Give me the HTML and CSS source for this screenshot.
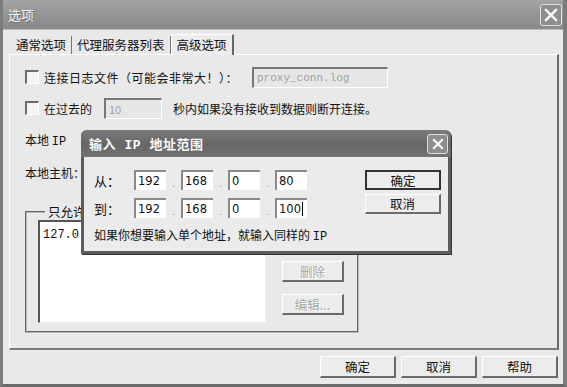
FILE: index.html
```html
<!DOCTYPE html>
<html lang="zh-CN">
<head>
    <meta charset="UTF-8">
    <title>选项</title>
    <link rel="stylesheet" href="styles.css">
</head>
<body>
    <div class="window">
        <div class="titlebar">
            <span class="title">选项</span>
            <span class="close">
                <svg width="14" height="14" viewBox="0 0 14 14"><path d="M2 2 L12 12 M12 2 L2 12" stroke="#fff" stroke-width="2.4" stroke-linecap="square"/></svg>
            </span>
        </div>

        <div class="client">
            <div class="tabs">
                <span class="tab">通常选项</span>
                <span class="tab">代理服务器列表</span>
                <span class="tab active">高级选项</span>
            </div>

            <div class="panel">
                <div class="row row-log">
                    <span class="check"></span>
                    <span class="label">连接日志文件（可能会非常大！）：</span>
                    <span class="field disabled log-field mono">proxy_conn.log</span>
                </div>
                <div class="row row-timeout">
                    <span class="check"></span>
                    <span class="label">在过去的</span>
                    <span class="field disabled sec-field">10</span>
                    <span class="label after">秒内如果没有接收到数据则断开连接。</span>
                </div>
                <div class="row row-ip">
                    <span class="label">本地 <span class="mono">IP</span></span>
                </div>
                <div class="row row-host">
                    <span class="label">本地主机：</span>
                </div>

                <fieldset class="group">
                    <legend>只允许</legend>
                    <div class="group-body">
                        <div class="listbox"><span class="mono">127.0</span></div>
                        <div class="side-buttons">
                            <span class="btn small disabled">删除</span>
                            <span class="btn small disabled">编辑...</span>
                        </div>
                    </div>
                </fieldset>
            </div>

            <div class="footer">
                <span class="btn">确定</span>
                <span class="btn">取消</span>
                <span class="btn">帮助</span>
            </div>
        </div>

        <!-- 弹出的对话框 -->
        <div class="dialog">
            <div class="dialog-title">
                <span class="title">输入 <span class="mono">IP</span> 地址范围</span>
                <span class="close small">
                    <svg width="12" height="12" viewBox="0 0 12 12"><path d="M2 2 L10 10 M10 2 L2 10" stroke="#fff" stroke-width="2.2" stroke-linecap="square"/></svg>
                </span>
            </div>
            <div class="dialog-body">
                <div class="ip-area">
                    <div class="ip-row">
                        <span class="ip-label">从：</span>
                        <span class="octet">192</span><span class="dot">.</span>
                        <span class="octet">168</span><span class="dot">.</span>
                        <span class="octet">0</span><span class="dot">.</span>
                        <span class="octet">80</span>
                    </div>
                    <div class="ip-row">
                        <span class="ip-label">到：</span>
                        <span class="octet">192</span><span class="dot">.</span>
                        <span class="octet">168</span><span class="dot">.</span>
                        <span class="octet">0</span><span class="dot">.</span>
                        <span class="octet">100<i class="caret"></i></span>
                    </div>
                    <p class="hint">如果你想要输入单个地址，就输入同样的 <span class="mono">IP</span></p>
                </div>
                <div class="dialog-buttons">
                    <span class="btn default">确定</span>
                    <span class="btn">取消</span>
                </div>
            </div>
        </div>
    </div>
</body>
</html>
```

FILE: styles.css
```css
/* общие */
body {
    margin: 0;
    font-family: "Noto Sans CJK SC", sans-serif;
    font-size: 12px;
    color: #111;
}

.mono {
    font-family: "Liberation Mono", "Noto Sans CJK SC", monospace;
}

.window {
    position: relative;
    width: 567px;
    height: 387px;
    box-sizing: border-box;
    background: #e9e9e9;
    border-left: 3px solid #7c7c7c;
    border-right: 4px solid #7c7c7c;
    border-bottom: 3px solid #6a6a6a;
    display: flex;
    flex-direction: column;
    overflow: hidden;
}

.titlebar {
    height: 29px;
    flex: none;
    display: flex;
    align-items: center;
    justify-content: space-between;
    padding: 0 1px 0 5px;
    background: linear-gradient(#a4a4a4, #929292 60%, #8a8a8a);
    border-bottom: 1px solid #bdbdbd;
}

.titlebar .title {
    color: #f4f4f4;
    font-size: 13px;
    text-shadow: 1px 1px 0 #707070;
}

.close {
    width: 20px;
    height: 20px;
    display: flex;
    align-items: center;
    justify-content: center;
    background: #8e8e8e;
    border: 1px solid #e0e0e0;
    border-radius: 3px;
}

.close.small {
    width: 19px;
    height: 18px;
}

.client {
    flex: 1;
    display: flex;
    flex-direction: column;
    padding: 4px 4px 0 6px;
}

.tabs {
    display: flex;
    height: 20px;
    padding-left: 2px;
    align-items: flex-end;
}

.tab {
    height: 18px;
    line-height: 18px;
    padding: 0 5px;
    border-right: 1px solid #777;
    font-size: 12.5px;
}

.tab.active {
    height: 20px;
    line-height: 20px;
    background: #ececec;
    border-top: 1px solid #fff;
    border-left: 1px solid #fff;
    border-right: 2px solid #666;
    margin-bottom: -1px;
    position: relative;
}

.panel {
    height: 296px;
    box-sizing: border-box;
    border-top: 1px solid #fff;
    border-left: 1px solid #fff;
    border-right: 2px solid #6a6a6a;
    border-bottom: 2px solid #7a7a7a;
    padding: 11px 0 0 15px;
    display: flex;
    flex-direction: column;
}

.row {
    display: flex;
    align-items: center;
    height: 22px;
}

.row-timeout { margin-top: 9px; }
.row-ip { margin-top: 10px; }
.row-host { margin-top: 10px; }

.check {
    width: 11px;
    height: 11px;
    background: #f4f4f4;
    border-top: 2px solid #6c6c6c;
    border-left: 2px solid #6c6c6c;
    border-right: 1px solid #fff;
    border-bottom: 1px solid #fff;
    margin-right: 5px;
}

.label { white-space: nowrap; }

.row-log .label { letter-spacing: 0.5px; }

.field {
    height: 21px;
    box-sizing: border-box;
    display: flex;
    align-items: center;
    padding-left: 3px;
    border-top: 2px solid #777;
    border-left: 2px solid #777;
    border-right: 1px solid #fff;
    border-bottom: 1px solid #fff;
    background: #fff;
}

.field.disabled {
    background: #e6e6e6;
    color: #a0a0a0;
    font-size: 11px;
}

.log-field {
    width: 136px;
    margin-left: 14px;
}

.sec-field {
    width: 58px;
    margin-left: 12px;
}

.label.after { margin-left: 11px; }

/* группа */
.group {
    width: 334px;
    height: 128px;
    box-sizing: border-box;
    margin: 22px 0 0 0;
    padding: 0 0 0 11px;
    border: 2px groove #b8b8b8;
}

.group legend {
    padding: 0 3px;
    margin-left: 7px;
    font-size: 12.5px;
    line-height: 14px;
}

.group-body {
    display: flex;
    margin-top: 1px;
}

.listbox {
    width: 222px;
    height: 98px;
    background: #fff;
    border-top: 2px solid #555;
    border-left: 2px solid #555;
    border-right: 1px solid #eee;
    border-bottom: 1px solid #eee;
    padding: 2px 0 0 3px;
}

.side-buttons {
    margin-left: 16px;
    display: flex;
    flex-direction: column;
    gap: 12px;
    padding-top: 41px;
}

.btn {
    display: flex;
    align-items: center;
    justify-content: center;
    box-sizing: border-box;
    width: 76px;
    height: 22px;
    background: #ececec;
    border-top: 1px solid #fff;
    border-left: 1px solid #fff;
    border-right: 2px solid #6a6a6a;
    border-bottom: 2px solid #6a6a6a;
    font-size: 12.5px;
}

.btn.small {
    width: 62px;
    height: 21px;
}

.btn.disabled {
    color: #a6a6a6;
    text-shadow: 1px 1px 0 #fff;
}

.btn.default {
    border: 2px solid #333;
}

.footer {
    display: flex;
    justify-content: flex-end;
    gap: 5px;
    padding: 6px 1px 0 0;
}

/* диалог поверх окна */
.dialog {
    position: absolute;
    left: 78px;
    top: 130px;
    width: 370px;
    height: 124px;
    box-sizing: border-box;
    background: #ebebeb;
    border: 3px solid #5c5c5c;
    border-top: none;
    border-radius: 6px 6px 0 0;
    box-shadow: 1px 1px 0 #333;
    display: flex;
    flex-direction: column;
}

.dialog-title {
    height: 27px;
    margin: 0 -3px;
    padding: 0 3px 0 8px;
    display: flex;
    align-items: center;
    justify-content: space-between;
    background: linear-gradient(#7a7a7a, #666 55%, #747474);
    border-radius: 6px 6px 0 0;
}

.dialog-title .title {
    color: #fafafa;
    font-weight: bold;
    font-size: 13px;
    letter-spacing: 0.5px;
    word-spacing: 5px;
}

.dialog-body {
    flex: 1;
    display: flex;
    padding: 13px 0 0 10px;
}

.ip-area {
    display: flex;
    flex-direction: column;
    gap: 8px;
}

.ip-row {
    display: flex;
    align-items: center;
    height: 20px;
}

.ip-label {
    width: 40px;
    font-size: 13px;
}

.octet {
    width: 32px;
    height: 20px;
    box-sizing: border-box;
    display: flex;
    align-items: center;
    padding-left: 2px;
    background: #fff;
    border-top: 2px solid #8a8a8a;
    border-left: 2px solid #8a8a8a;
    font-family: "DejaVu Sans", sans-serif;
    font-size: 11.5px;
}

.dot {
    width: 15px;
    align-self: flex-end;
    text-align: center;
    color: #999;
    font-size: 9px;
}

.caret {
    width: 1px;
    height: 14px;
    background: #000;
    margin-left: 1px;
}

.hint {
    margin: 0;
    white-space: nowrap;
}

.dialog-buttons {
    margin-left: 38px;
    display: flex;
    flex-direction: column;
    gap: 4px;
}

.dialog-buttons .btn {
    width: 76px;
    height: 20px;
}
```
